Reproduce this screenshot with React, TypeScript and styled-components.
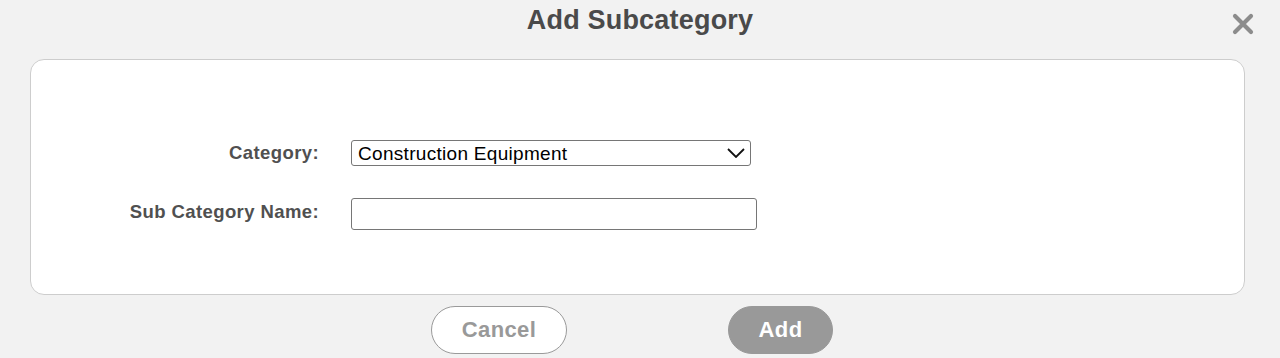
import React, {useState} from 'react';
import styled, {createGlobalStyle} from 'styled-components';

const GlobalStyle = createGlobalStyle`
  html, body {
    margin: 0;
    padding: 0;
    background: #F2F2F2;
    font-family: "Liberation Sans", Arial, sans-serif;
  }
`;

const categories = ['Construction Equipment', 'Agricultural Equipment', 'Trucks', 'Trailers'];

const App = () => {
  const [category, setCategory] = useState(categories[0]);
  const [name, setName] = useState('');

  return (
    <Page>
      <GlobalStyle />
      <Header>
        <span />
        <Title>Add Subcategory</Title>
        <CloseButton aria-label="Close">
          <svg width="22" height="22" viewBox="0 0 22 22">
            <path d="M3 3 L19 19 M19 3 L3 19" stroke="#8C8C8C" strokeWidth="4.2" strokeLinecap="round" />
          </svg>
        </CloseButton>
      </Header>

      <Card>
        <FormGrid>
          <Label htmlFor="category">Category:</Label>
          <SelectWrap>
            <Select id="category" value={category} onChange={(e) => setCategory(e.target.value)}>
              {categories.map((c) => (
                <option key={c} value={c}>{c}</option>
              ))}
            </Select>
            <Chevron width="18" height="10" viewBox="0 0 18 10">
              <path d="M1 1 L9 9 L17 1" fill="none" stroke="#111" strokeWidth="1.8" />
            </Chevron>
          </SelectWrap>

          <Label htmlFor="subname" $lift={4}>Sub Category Name:</Label>
          <TextInput id="subname" value={name} onChange={(e) => setName(e.target.value)} />
        </FormGrid>
      </Card>

      <Actions>
        <Button>Cancel</Button>
        <Button $primary>Add</Button>
      </Actions>
    </Page>
  );
};

export default App;

const Page = styled.div`
  width: 1280px;
  height: 358px;
  overflow: hidden;
  background: #F2F2F2;
`;

const Header = styled.div`
  height: 59px;
  display: grid;
  grid-template-columns: 1fr auto 1fr;
  align-items: start;
`;

const Title = styled.h1`
  margin: 5px 0 0;
  font-size: 27px;
  line-height: 30px;
  font-weight: bold;
  color: #4A4A4A;
  letter-spacing: 0.2px;
`;

const CloseButton = styled.button`
  justify-self: end;
  margin: 13px 26px 0 0;
  padding: 0;
  border: none;
  background: none;
  cursor: pointer;
  display: flex;
`;

const Card = styled.div`
  margin: 0 35px 0 30px;
  height: 236px;
  box-sizing: border-box;
  background: #FFFFFF;
  border: 1px solid #CDCDCD;
  border-radius: 14px;
  padding-top: 80px;
`;

const FormGrid = styled.div`
  display: grid;
  grid-template-columns: 288px auto;
  column-gap: 32px;
  row-gap: 32px;
  align-items: center;
  justify-items: start;
`;

const Label = styled.label<{$lift?: number}>`
  justify-self: end;
  margin-bottom: ${(p) => p.$lift || 0}px;
  font-size: 18.5px;
  font-weight: bold;
  letter-spacing: 0.4px;
  color: #505050;
`;

const SelectWrap = styled.div`
  position: relative;
  width: 400px;
  height: 26px;
`;

const Select = styled.select`
  appearance: none;
  width: 100%;
  height: 100%;
  box-sizing: border-box;
  margin: 0;
  padding: 0 30px 0 6px;
  border: 1px solid #767676;
  border-radius: 3px;
  background: #FFFFFF;
  font-family: "Liberation Sans", Arial, sans-serif;
  font-size: 19px;
  letter-spacing: 0.3px;
  color: #000;
  outline: none;
`;

const Chevron = styled.svg`
  position: absolute;
  right: 6px;
  top: 8px;
  pointer-events: none;
`;

const TextInput = styled.input`
  width: 406px;
  height: 32px;
  box-sizing: border-box;
  margin: 0;
  padding: 0 6px;
  border: 1px solid #767676;
  border-radius: 3px;
  background: #FFFFFF;
  font-family: "Liberation Sans", Arial, sans-serif;
  font-size: 18px;
  outline: none;
`;

const Actions = styled.div`
  display: flex;
  justify-content: center;
  gap: 161px;
  padding: 11px 16px 0 0;
`;

const Button = styled.button<{$primary?: boolean}>`
  height: 48px;
  width: ${(p) => (p.$primary ? '105px' : '136px')};
  box-sizing: border-box;
  padding: 0;
  border-radius: 24px;
  border: 1px solid ${(p) => (p.$primary ? '#999999' : '#9A9A9A')};
  background: ${(p) => (p.$primary ? '#999999' : '#FFFFFF')};
  color: ${(p) => (p.$primary ? '#FFFFFF' : '#999999')};
  font-family: "Liberation Sans", Arial, sans-serif;
  font-size: 22px;
  letter-spacing: 0.4px;
  font-weight: bold;
  cursor: pointer;
`;
